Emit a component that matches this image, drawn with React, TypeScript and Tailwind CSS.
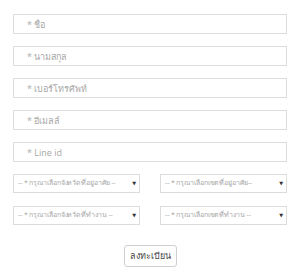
function App() {
  const fields = ['* ชื่อ', '* นามสกุล', '* เบอร์โทรศัพท์', '* อีเมลล์', '* Line id']
  const selects = [
    '-- * กรุณาเลือกจังหวัดที่อยู่อาศัย --',
    '-- * กรุณาเลือกเขตที่อยู่อาศัย--',
    '-- * กรุณาเลือกจังหวัดที่ทำงาน --',
    '-- * กรุณาเลือกเขตที่ทำงาน --',
  ]
  return (
    <div className="w-[300px] h-[272px] bg-white px-[13px] pt-[14px]" style={{ fontFamily: '"Open Sans", "DejaVu Sans", sans-serif' }}>
      <div className="flex flex-col gap-[12px]">
        {fields.map((f) => (
          <input
            key={f}
            type="text"
            placeholder={f}
            className="h-[20px] w-full border border-[#dcdcdc] pl-[13px] text-[9px] text-[#555] placeholder:text-[#a8a8a8] outline-none"
          />
        ))}
      </div>
      <div className="grid grid-cols-2 gap-x-[20px] gap-y-[13px] mt-[12px]">
        {selects.map((s) => (
          <div key={s} className="h-[19px] border border-[#dcdcdc] flex items-center justify-between pl-[4px] pr-[3px]">
            <span className="text-[7px] tracking-[-0.1px] text-[#a8a8a8] whitespace-nowrap">{s}</span>
            <span className="text-[5px] text-[#333] leading-none">▼</span>
          </div>
        ))}
      </div>
      <div className="flex justify-center mt-[20px]">
        <button className="h-[22px] w-[53px] border border-[#cfcfcf] rounded-[3px] text-[9px] text-[#444] bg-white">ลงทะเบียน</button>
      </div>
    </div>
  )
}

export default App
